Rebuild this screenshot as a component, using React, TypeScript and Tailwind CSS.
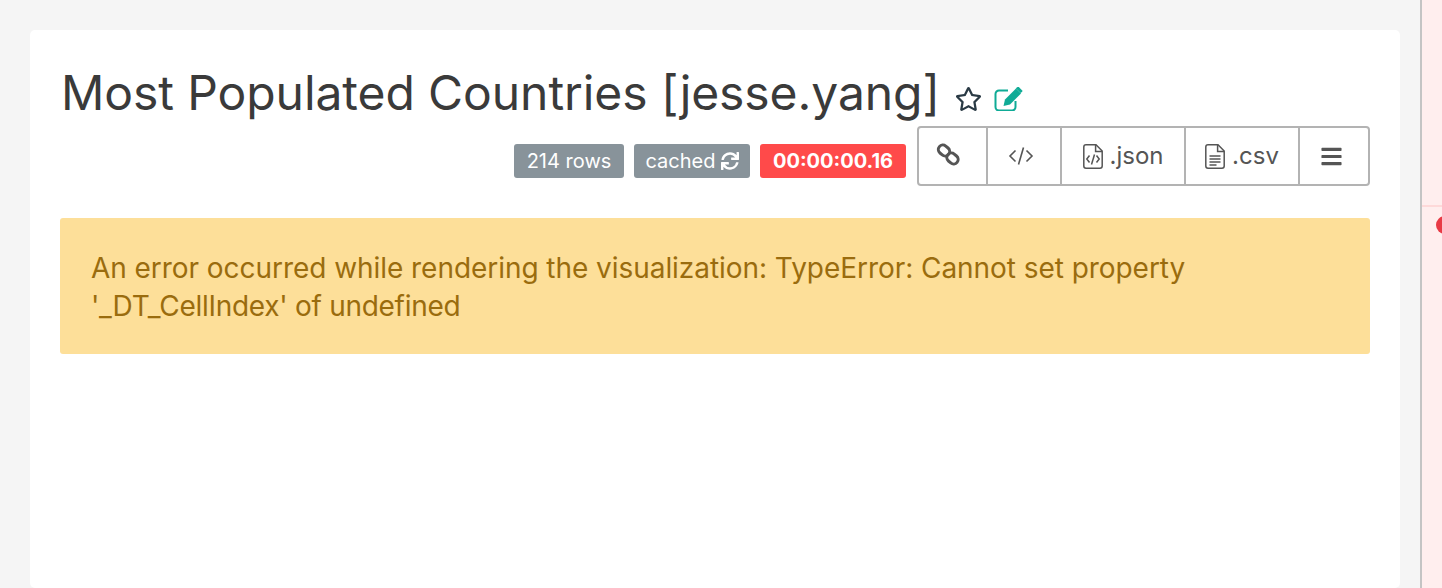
import { FaBars, FaRegStar, FaSync } from "react-icons/fa";

function CodeIcon() {
  return (
    <svg viewBox="0 0 26 20" className="w-[26px] h-[20px]" fill="none" stroke="currentColor" strokeWidth="1.6">
      <path d="M7.5 4.5L2 10l5.5 5.5" />
      <path d="M18.5 4.5L24 10l-5.5 5.5" />
      <path d="M15.5 1.5l-5 17" />
    </svg>
  );
}

function ChainIcon() {
  return (
    <svg viewBox="0 0 24 24" className="w-[24px] h-[24px] -mt-[2px]" fill="none" stroke="currentColor" strokeWidth="3">
      <rect x="2" y="3" width="12" height="9" rx="4.5" transform="rotate(40 8 7.5)" />
      <rect x="10.5" y="11" width="12" height="9" rx="4.5" transform="rotate(40 16.5 15.5)" />
    </svg>
  );
}

function EditIcon() {
  return (
    <svg viewBox="0 0 29 24" className="w-[29px] h-[24px] text-[#0fab96]">
      <path d="M14 3.5H5a3.5 3.5 0 0 0-3.5 3.5v13A3.5 3.5 0 0 0 5 23.5h13a3.5 3.5 0 0 0 3.5-3.5v-6" fill="none" stroke="currentColor" strokeWidth="2" />
      <path d="M22 1.5l5 5-11 11-6.5 1.5 1.5-6.5z" fill="currentColor" />
      <path d="M23.5 0l1-.3 4 4-.3 1-1.7 1.3-4.7-4.7z" fill="currentColor" />
    </svg>
  );
}

function FileIcon({ kind }: { kind: "code" | "lines" }) {
  return (
    <svg viewBox="0 0 20 25" className="w-[20px] h-[25px]" fill="none" stroke="currentColor" strokeWidth="1.5">
      <path d="M13 .8H3A2.2 2.2 0 0 0 .8 3v19A2.2 2.2 0 0 0 3 24.2h14a2.2 2.2 0 0 0 2.2-2.2V7z" />
      <path d="M12.6 1v6.4h6.4" />
      {kind === "code" ? (
        <>
          <path d="M6.5 11.5L3.8 15l2.7 3.5" />
          <path d="M13.5 11.5l2.7 3.5-2.7 3.5" />
          <path d="M11.5 10.5l-3 10" />
        </>
      ) : (
        <>
          <path d="M4.5 12h11" />
          <path d="M4.5 15h11" />
          <path d="M4.5 18h11" />
          <path d="M4.5 21h7" />
        </>
      )}
    </svg>
  );
}

export default function App() {
  return (
    <div className="flex h-[588px] overflow-hidden bg-[#f5f5f5] font-['Inter',sans-serif]">
      <main className="flex-1 pt-[30px] pl-[30px] pr-[20px]">
        <div className="bg-white rounded-[5px] h-full px-[30px] pt-[30px]">
          <div className="flex items-end pl-[1px]">
            <h1 className="text-[48px] leading-[66px] tracking-[-0.08px] text-[#3a3a3a]">Most Populated Countries [jesse.yang]</h1>
            <FaRegStar className="ml-[15px] mb-[15px] w-[27px] h-[24px] text-[#2a3a45]" />
            <div className="ml-[12px] mb-[15px]">
              <EditIcon />
            </div>
          </div>
          <div className="flex justify-end items-start">
            <div className="flex gap-[10px] mt-[18px] mr-[11px] text-[20px] text-white">
              <span className="w-[110px] h-[34px] flex items-center justify-center bg-[#88939a] rounded-[3px]">214 rows</span>
              <span className="w-[116px] h-[34px] flex items-center justify-center gap-[5px] bg-[#88939a] rounded-[3px]">
                cached <FaSync className="w-[18px] h-[18px]" />
              </span>
              <span className="w-[146px] h-[34px] flex items-center justify-center bg-[#ff4a4a] rounded-[3px] font-bold">00:00:00.16</span>
            </div>
            <div className="flex h-[60px] w-[453px] border-2 border-[#b3b3b3] rounded-[4px] text-[24px] text-[#555]">
              <button className="w-[69px] pr-[9px] flex items-center justify-center border-r-2 border-[#b3b3b3]">
                <ChainIcon />
              </button>
              <button className="w-[74px] pr-[7px] flex items-center justify-center border-r-2 border-[#b3b3b3]">
                <CodeIcon />
              </button>
              <button className="w-[124px] flex items-center justify-center gap-[7px] border-r-2 border-[#b3b3b3]">
                <FileIcon kind="code" />
                .json
              </button>
              <button className="w-[114px] flex items-center justify-center gap-[7px] border-r-2 border-[#b3b3b3]">
                <FileIcon kind="lines" />
                .csv
              </button>
              <button className="flex-1 pr-[6px] flex items-center justify-center">
                <FaBars className="w-[23px] h-[23px]" />
              </button>
            </div>
          </div>
          <div className="mt-[32px] bg-[#fddf99] rounded-[3px] px-[31px] pt-[31px] pb-[29px] text-[28px] leading-[38px] tracking-[-0.05px] text-[#9a6c0e]">
            An error occurred while rendering the visualization: TypeError: Cannot set property
            <br />
            <span className="tracking-[-0.28px]">'_DT_CellIndex' of undefined</span>
          </div>
        </div>
      </main>
      <aside className="w-[22px] h-full shrink-0 border-l-2 border-[#c4c4c4] bg-[#ffeeee]">
        <div className="h-[207px] border-b-2 border-[#fed9d9]" />
        <div className="mt-[9px] ml-[14px] w-[18px] h-[18px] rounded-full bg-[#e83a45]" />
      </aside>
    </div>
  );
}
